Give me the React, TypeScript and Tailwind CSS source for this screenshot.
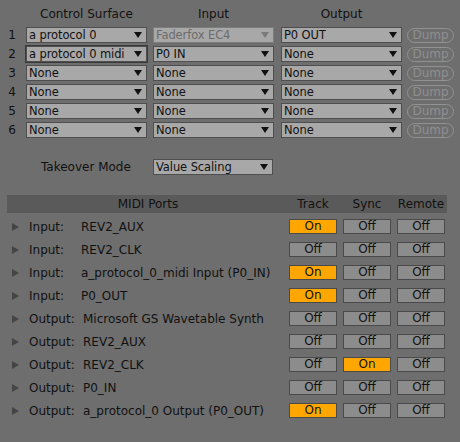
import React from 'react';

const font = "font-['DejaVu_Sans','Open_Sans',sans-serif]";

const Arrow: React.FC<{ dim?: boolean }> = ({ dim }) => (
  <svg width="8" height="6" viewBox="0 0 8 6" className="shrink-0">
    <path d="M0 0H8L4 6Z" fill={dim ? '#7a7a7a' : '#111'} />
  </svg>
);

const Select: React.FC<{ value: string; width?: string; dim?: boolean; focus?: boolean }> = ({ value, width = 'w-[121px]', dim, focus }) => (
  <div
    className={`${width} h-[16px] flex items-center justify-between pl-[2px] pr-[4px] bg-[#a8a8a8] border ${
      dim ? 'border-[#7c7c7c] text-[#6c6c6c]' : 'border-[#4e4e4e] text-[#111]'
    } ${focus ? 'outline outline-1 outline-[#3a3a3a]' : ''}`}
  >
    <span className="whitespace-nowrap overflow-hidden leading-[14px] text-[11.5px] tracking-[-0.1px]">{value}</span>
    <Arrow dim={dim} />
  </div>
);

const Toggle: React.FC<{ on?: boolean }> = ({ on }) => (
  <div
    className={`w-[48px] h-[15px] flex items-center justify-center border border-[#4a4a4a] leading-[13px] ${
      on ? 'bg-[#ffa700]' : 'bg-[#8c8c8c]'
    }`}
  >
    {on ? 'On' : 'Off'}
  </div>
);

const surfaces = [
  { cs: 'a protocol 0', inp: 'Faderfox EC4', out: 'P0 OUT', dim: true },
  { cs: 'a protocol 0 midi', inp: 'P0 IN', out: 'None', focus: true },
  { cs: 'None', inp: 'None', out: 'None' },
  { cs: 'None', inp: 'None', out: 'None' },
  { cs: 'None', inp: 'None', out: 'None' },
  { cs: 'None', inp: 'None', out: 'None' },
];

const ports = [
  { kind: 'Input:', name: 'REV2_AUX', track: true },
  { kind: 'Input:', name: 'REV2_CLK' },
  { kind: 'Input:', name: 'a_protocol_0_midi Input (P0_IN)', track: true },
  { kind: 'Input:', name: 'P0_OUT', track: true },
  { kind: 'Output:', name: 'Microsoft GS Wavetable Synth' },
  { kind: 'Output:', name: 'REV2_AUX' },
  { kind: 'Output:', name: 'REV2_CLK', sync: true },
  { kind: 'Output:', name: 'P0_IN' },
  { kind: 'Output:', name: 'a_protocol_0 Output (P0_OUT)', track: true },
];

export default function App() {
  return (
    <div className={`w-[460px] h-[442px] bg-[#6e6e6e] text-[12px] text-[#111] overflow-hidden ${font}`}>
      {/* control surfaces */}
      <div className="h-[27px] flex pt-[6px] leading-[16px]">
        <div className="w-[26px]" />
        <div className="w-[121px] text-center">Control Surface</div>
        <div className="w-[121px] ml-[6px] text-center">Input</div>
        <div className="w-[121px] ml-[7px] text-center">Output</div>
      </div>
      <div className="flex flex-col gap-[3px]">
        {surfaces.map((s, i) => (
          <div key={i} className="flex items-center h-[16px]">
            <div className="w-[24px] text-center">{i + 1}</div>
            <div className="ml-[2px]">
              <Select value={s.cs} focus={s.focus} />
            </div>
            <div className="ml-[6px]">
              <Select value={s.inp} dim={s.dim} />
            </div>
            <div className="ml-[7px]">
              <Select value={s.out} />
            </div>
            <div className="ml-[5px] w-[47px] h-[15px] rounded-full border border-[#929292] text-[#8e8e8e] flex items-center justify-center leading-[13px]">
              Dump
            </div>
          </div>
        ))}
      </div>

      {/* takeover */}
      <div className="mt-[21px] flex items-center h-[16px]">
        <div className="w-[153px] pl-[41px]">Takeover Mode</div>
        <Select value="Value Scaling" width="w-[120px]" />
      </div>

      {/* midi ports */}
      <div className="mt-[20px] mx-[7px] w-[440px] h-[18px] bg-[#5a5a5a] flex items-center pr-[2px]">
        <div className="flex-1 text-center">MIDI Ports</div>
        <div className="flex gap-[6px]">
          <div className="w-[48px] text-center">Track</div>
          <div className="w-[48px] text-center">Sync</div>
          <div className="w-[48px] text-center">Remote</div>
        </div>
      </div>
      <div className="mt-[2px] mx-[7px] w-[440px] flex flex-col">
        {ports.map((p, i) => (
          <div key={i} className="h-[23px] flex items-center pr-[2px]">
            <div className="flex-1 flex items-center pl-[5px]">
              <svg width="7" height="8" viewBox="0 0 7 8" className="shrink-0">
                <path d="M0 0L7 4L0 8Z" fill="#454545" />
              </svg>
              <span className={`ml-[10px] ${p.kind === 'Input:' ? 'w-[52px]' : 'w-[54px]'}`}>{p.kind}</span>
              <span className="whitespace-nowrap">{p.name}</span>
            </div>
            <div className="flex gap-[6px]">
              <Toggle on={p.track} />
              <Toggle on={p.sync} />
              <Toggle />
            </div>
          </div>
        ))}
      </div>
    </div>
  );
}
